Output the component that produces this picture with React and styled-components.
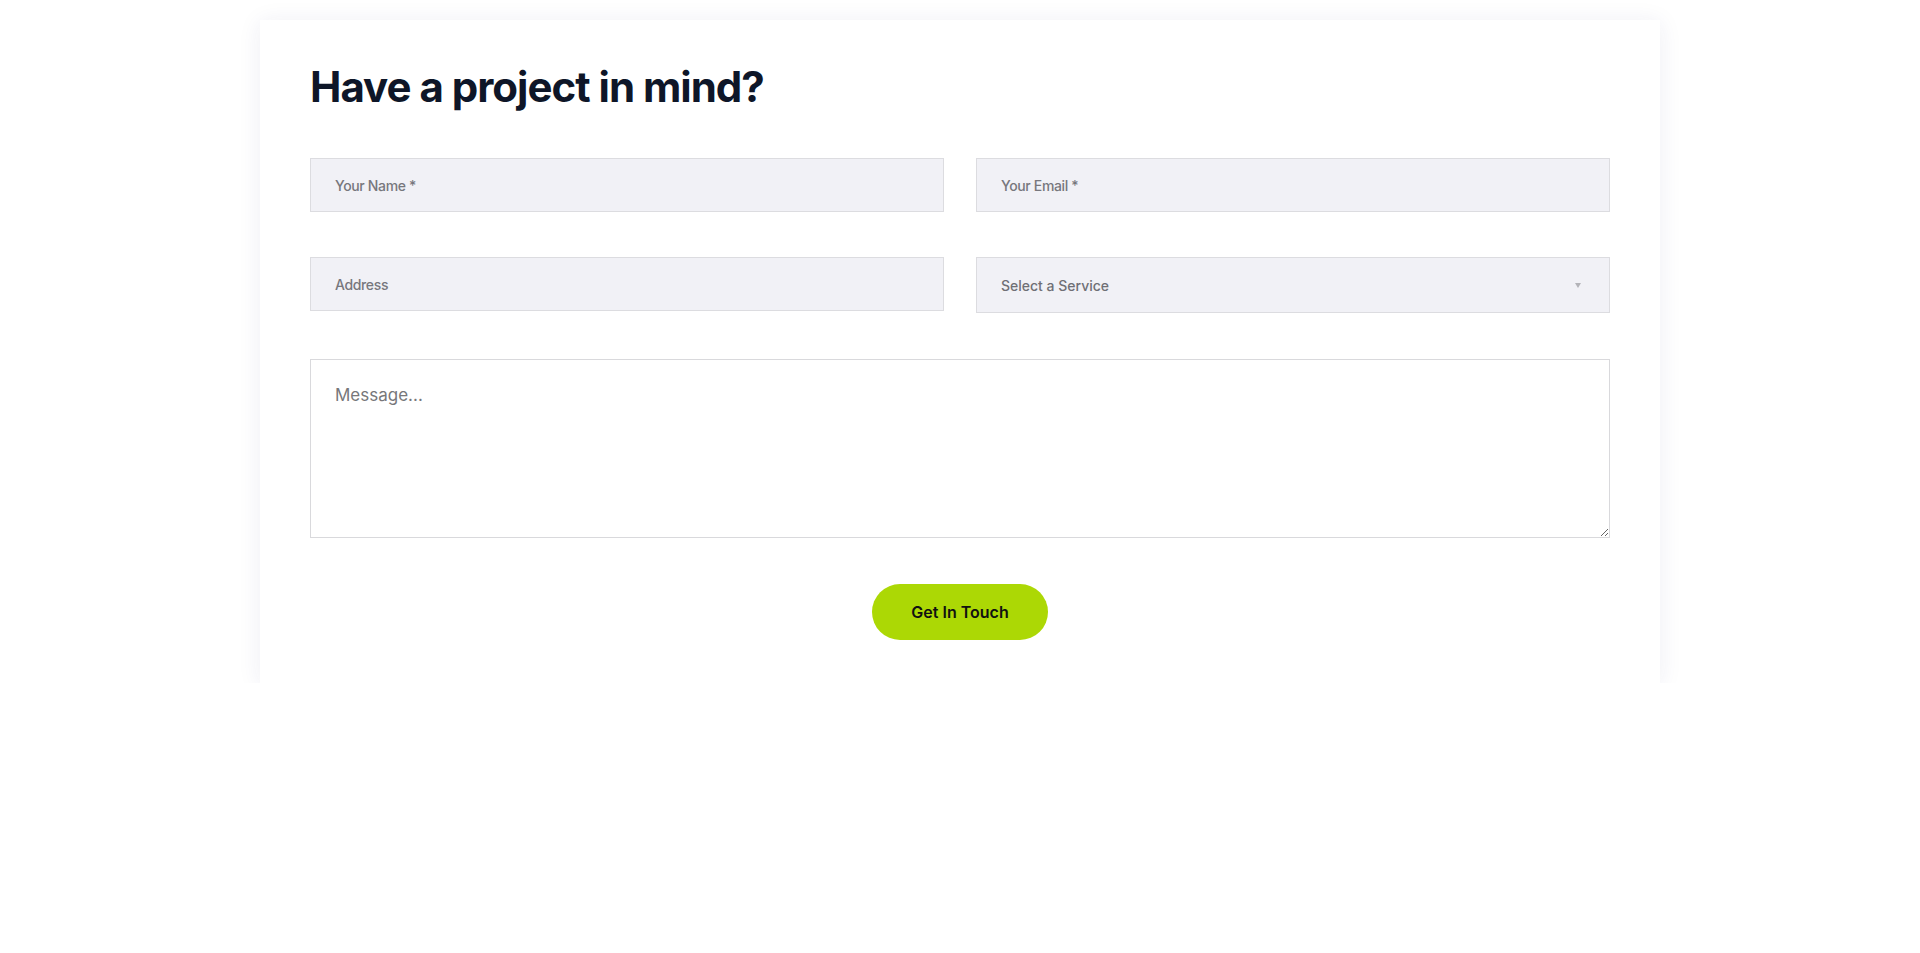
import React from "react";
import styled, { createGlobalStyle } from "styled-components";

const GlobalStyle = createGlobalStyle`
  body {
    margin: 0;
    background: #fff;
    font-family: Inter, "Noto Sans", sans-serif;
  }
`;

const Card = styled.section`
  width: 1400px;
  box-sizing: border-box;
  margin: 20px auto 0;
  padding: 46px 50px 43px;
  background: #fff;
  box-shadow: 0 2px 22px rgba(40, 40, 110, 0.08);
`;

const Title = styled.h2`
  margin: 0 0 50px;
  font-family: Inter, sans-serif;
  font-size: 42px;
  line-height: 42px;
  font-weight: 700;
  letter-spacing: -1px;
  color: #0e1628;
`;

const Grid = styled.div`
  display: grid;
  grid-template-columns: 1fr 1fr;
  column-gap: 32px;
  row-gap: 45px;
  align-items: start;
`;

const Field = styled.input`
  box-sizing: border-box;
  width: 100%;
  height: ${(p) => p.$h || 54}px;
  padding: 0 24px;
  border: 1px solid #dcdce0;
  background: #f1f1f6;
  font-family: Inter, sans-serif;
  font-size: 14px;
  font-weight: 500;
  letter-spacing: -0.35px;
  color: #333;
  outline: none;
  &::placeholder {
    color: #77777d;
  }
`;

const SelectBox = styled.div`
  box-sizing: border-box;
  height: 56px;
  display: flex;
  align-items: center;
  padding: 0 24px;
  border: 1px solid #dcdce0;
  background: #f1f1f6;
  font-size: 14px;
  font-weight: 500;
  letter-spacing: 0;
  color: #6f6f75;
`;

const Caret = styled.span`
  margin-left: auto;
  margin-right: 4px;
  width: 0;
  height: 0;
  border-left: 3.5px solid transparent;
  border-right: 3.5px solid transparent;
  border-top: 5px solid #b3b3b8;
`;

const Message = styled.textarea`
  display: block;
  box-sizing: border-box;
  width: 100%;
  height: 179px;
  margin-top: 46px;
  padding: 23px 24px;
  border: 1px solid #d9d9dc;
  background: #fff;
  font-family: Inter, sans-serif;
  font-size: 17px;
  line-height: 1.5;
  color: #333;
  outline: none;
  &::placeholder {
    color: #77777a;
  }
`;

const Actions = styled.div`
  display: flex;
  justify-content: center;
  margin-top: 46px;
`;

const Button = styled.button`
  height: 56px;
  width: 176px;
  border: none;
  border-radius: 28px;
  background: #acd805;
  font-family: Inter, sans-serif;
  font-size: 16px;
  font-weight: 600;
  color: #111;
  cursor: pointer;
`;

export default function App() {
  return (
    <>
      <GlobalStyle />
      <Card>
        <Title>Have a project in mind?</Title>
        <Grid>
          <Field placeholder="Your Name *" />
          <Field placeholder="Your Email *" />
          <Field placeholder="Address" />
          <SelectBox>
            Select a Service
            <Caret />
          </SelectBox>
        </Grid>
        <Message placeholder="Message..." />
        <Actions>
          <Button>Get In Touch</Button>
        </Actions>
      </Card>
    </>
  );
}
